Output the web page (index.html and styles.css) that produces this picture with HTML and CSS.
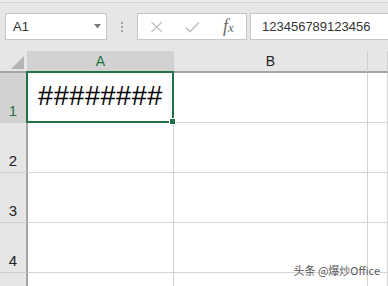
FILE: index.html
```html
<!DOCTYPE html>
<html lang="zh">
<head>
    <meta charset="UTF-8">
    <title>Excel</title>
    <link rel="stylesheet" href="styles.css">
</head>
<body>
    <div class="app">
        <div class="topline"></div>
        <div class="toolbar">
            <div class="namebox">
                <span>A1</span>
                <svg class="caret" width="7" height="5" viewBox="0 0 7 5"><path d="M0 0H7L3.5 4.5Z" fill="#7a7a7a"/></svg>
            </div>
            <div class="dots"><i></i><i></i><i></i></div>
            <div class="fxbox">
                <svg class="btn" width="14" height="12" viewBox="0 0 14 12"><path d="M1.5 1L12 11M12 1L1.5 11" stroke="#c2c2c2" stroke-width="1.3" fill="none"/></svg>
                <svg class="btn" width="15" height="12" viewBox="0 0 15 12"><path d="M1 6.5L5 10.5L14 1.5" stroke="#c2c2c2" stroke-width="1.6" fill="none"/></svg>
                <span class="fx">f<small>x</small></span>
            </div>
            <div class="formula">123456789123456</div>
        </div>

        <div class="sheet">
            <div class="corner"><span class="tri"></span></div>
            <div class="colhead active">A</div>
            <div class="colhead">B</div>
            <div class="colhead"></div>

            <div class="rowhead active">1</div>
            <div class="cell a1">
                ########
                <div class="selection"><span class="handle"></span></div>
            </div>
            <div class="cell"></div>
            <div class="cell"></div>

            <div class="rowhead">2</div>
            <div class="cell"></div>
            <div class="cell"></div>
            <div class="cell"></div>

            <div class="rowhead">3</div>
            <div class="cell"></div>
            <div class="cell"></div>
            <div class="cell"></div>

            <div class="rowhead">4</div>
            <div class="cell"></div>
            <div class="cell"></div>
            <div class="cell"></div>

            <div class="rowhead"></div>
            <div class="cell"></div>
            <div class="cell"></div>
            <div class="cell"></div>
        </div>

        <div class="watermark">头条 @爆炒Office</div>
    </div>
</body>
</html>
```

FILE: styles.css
```css
body {
    margin: 0;
    font-family: "Liberation Sans", Arial, sans-serif;
}

.app {
    position: relative;
    width: 388px;
    height: 286px;
    overflow: hidden;
    background-color: #e6e6e6;
}

.topline {
    height: 2px;
    background-color: #ececec;
    border-bottom: 1px solid #d6d6d6;
}

.toolbar {
    display: flex;
    align-items: center;
    height: 27px;
    margin: 10px 0 11px 0;
}

.namebox {
    display: flex;
    align-items: center;
    justify-content: space-between;
    box-sizing: border-box;
    width: 102px;
    height: 27px;
    margin-left: 5px;
    padding: 0 5px 0 7px;
    background-color: #fff;
    border: 1px solid #c6c6c6;
    font-size: 13px;
    color: #333;
}

.dots {
    display: flex;
    flex-direction: column;
    align-items: center;
    gap: 2px;
    width: 30px;
}

.dots i {
    display: block;
    width: 2px;
    height: 2px;
    background-color: #a0a0a0;
}

.fxbox {
    display: flex;
    align-items: center;
    box-sizing: border-box;
    width: 110px;
    height: 27px;
    padding-left: 12px;
    background-color: #fff;
    border: 1px solid #c6c6c6;
}

.btn {
    margin-right: 21px;
}

.btn + .btn {
    margin-right: 23px;
}

.fx {
    font-family: "Liberation Serif", serif;
    font-style: italic;
    font-size: 18px;
    color: #6a6a6a;
}

.fx small {
    font-size: 13px;
}

.formula {
    flex: 1;
    box-sizing: border-box;
    height: 27px;
    margin-left: 3px;
    margin-right: -4px;
    padding: 0 0 0 11px;
    line-height: 25px;
    background-color: #fff;
    border: 1px solid #c6c6c6;
    font-size: 13px;
    color: #333;
}

.sheet {
    display: grid;
    grid-template-columns: 28px 146px 194px 1fr;
    grid-template-rows: 22px 50px 50px 50px 50px 50px;
    background-color: #fff;
}

.corner {
    position: relative;
    background-color: #e6e6e6;
    border-bottom: 2px solid #a5a5a5;
    border-right: 1px solid #d0d0d0;
}

.tri {
    position: absolute;
    right: 3px;
    bottom: 2px;
    width: 0;
    height: 0;
    border-left: 13px solid transparent;
    border-bottom: 13px solid #b4b4b4;
}

.colhead {
    display: flex;
    align-items: center;
    justify-content: center;
    background-color: #e6e6e6;
    border-bottom: 2px solid #a5a5a5;
    border-right: 1px solid #cfcfcf;
    font-size: 14px;
    color: #222;
}

.colhead.active {
    background-color: #d2d2d2;
    color: #217346;
}

.rowhead {
    display: flex;
    align-items: flex-end;
    justify-content: center;
    box-sizing: border-box;
    padding-bottom: 3px;
    background-color: #e6e6e6;
    border-bottom: 1px solid #cdcdcd;
    border-right: 2px solid #a5a5a5;
    font-size: 15px;
    color: #222;
}

.rowhead.active {
    background-color: #d2d2d2;
    color: #217346;
}

.cell {
    border-bottom: 1px solid #d4d4d4;
    border-right: 1px solid #d4d4d4;
}

.a1 {
    position: relative;
    display: flex;
    align-items: center;
    justify-content: center;
    padding-bottom: 2px;
    font-size: 27px;
    letter-spacing: 0.6px;
    color: #000;
}

.selection {
    position: absolute;
    top: -2px;
    left: -2px;
    right: -1px;
    bottom: -1px;
    border: 2px solid #217346;
}

.handle {
    position: absolute;
    right: -4px;
    bottom: -4px;
    width: 5px;
    height: 5px;
    background-color: #217346;
    border: 1px solid #fff;
}

.watermark {
    position: absolute;
    right: 8px;
    bottom: 8px;
    font-family: "Noto Sans CJK SC", sans-serif;
    font-size: 11px;
    color: #555;
    text-shadow: 0 0 2px #fff, 0 0 2px #fff;
}
```
